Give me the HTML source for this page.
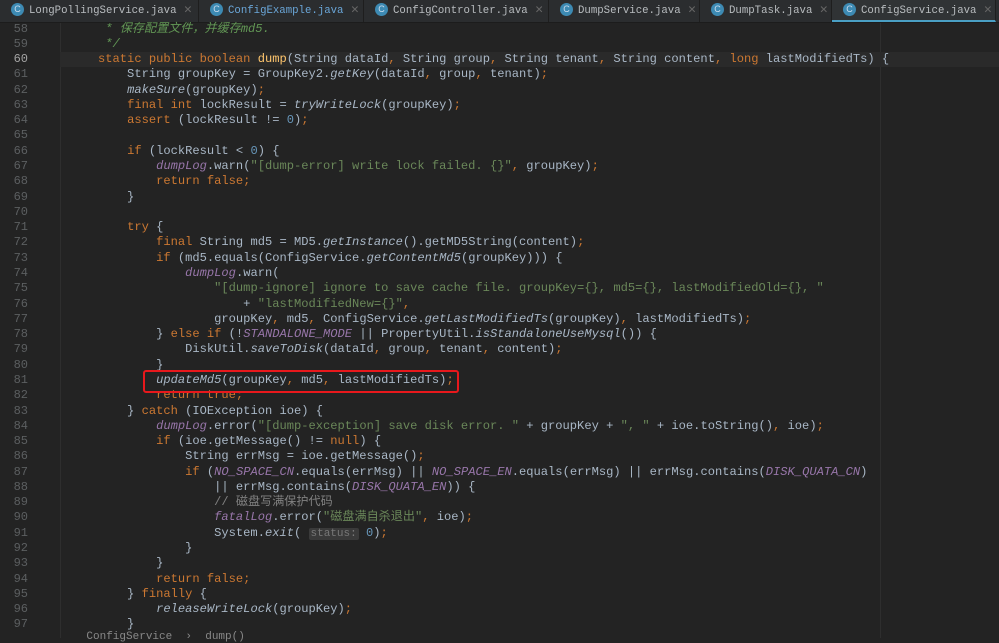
<!DOCTYPE html>
<html><head><meta charset="utf-8"><style>
body{margin:0;width:999px;height:638px;overflow:hidden;background:#232323;font-family:"Liberation Mono","Noto Sans CJK SC",monospace;}
#tabs{position:absolute;left:0;top:0;width:999px;height:22px;background:#2b2d2f;border-bottom:1px solid #1c1c1c;}
.tab{position:absolute;top:0;height:22px;font-size:10.7px;line-height:20px;color:#b8bcbf;white-space:nowrap;border-right:1px solid #1e1e1e;overflow:hidden}
.tab .c{display:inline-block;width:13px;height:13px;border-radius:50%;background:#3d8ab3;color:#cde;font-size:9px;line-height:13px;text-align:center;vertical-align:middle;margin:0 5px 2px 11px;font-family:"Liberation Sans",sans-serif}
.tab .x{color:#666;margin-left:7px;font-family:"Liberation Sans",sans-serif}
.act{background:#303335;border-bottom:2px solid #4a9fc4;height:20px}
.ln{position:absolute;left:0;width:28px;text-align:right;font-size:12px;color:#5c5f61}
.code{position:absolute;left:69px;font-size:12.1px;color:#a9b7c6;white-space:pre}
.row{position:absolute;left:0;width:999px;height:15.3px;line-height:15.3px}
.k{color:#cc7832}.s{color:#6a8759}.cm{color:#629755;font-style:italic}.f{color:#9876aa;font-style:italic}.i{font-style:italic}.n{color:#6897bb}.m{color:#ffc66d}.g{color:#808080}
.h{background:#3a3a3a;color:#787878;font-size:11px;border-radius:2px;padding:0 2px}
</style></head><body>
<div id="tabs">
<div class="tab" style="left:0;width:198px"><span class="c">C</span>LongPollingService.java<span class="x">✕</span></div>
<div class="tab" style="left:199px;width:164px;color:#6aa6d8"><span class="c">C</span>ConfigExample.java<span class="x">✕</span></div>
<div class="tab" style="left:364px;width:184px"><span class="c">C</span>ConfigController.java<span class="x">✕</span></div>
<div class="tab" style="left:549px;width:150px"><span class="c">C</span>DumpService.java<span class="x">✕</span></div>
<div class="tab" style="left:700px;width:131px"><span class="c">C</span>DumpTask.java<span class="x">✕</span></div>
<div class="tab act" style="left:832px;width:163px"><span class="c">C</span>ConfigService.java<span class="x">✕</span></div>
</div>
<div style="position:absolute;left:0;top:23px;width:999px;height:615px">
<div style="position:absolute;left:60px;top:0;width:1px;height:615px;background:#2e2e2e"></div>
<div style="position:absolute;left:880px;top:0;width:1px;height:615px;background:#2e2e2e"></div>
<div style="position:absolute;left:60px;top:28.6px;width:939px;height:15.3px;background:#2a2a2a"></div>
</div>
<div id="lines" style="position:absolute;left:0;top:21.5px">
<script>
var L=[
'     <span class="cm">* 保存配置文件，并缓存md5.</span>',
'     <span class="cm">*/</span>',
'    <span class="k">static public boolean </span><span class="m">dump</span>(String dataId<span class="k">, </span>String group<span class="k">, </span>String tenant<span class="k">, </span>String content<span class="k">, long </span>lastModifiedTs) {',
'        String groupKey = GroupKey2.<span class="i">getKey</span>(dataId<span class="k">, </span>group<span class="k">, </span>tenant)<span class="k">;</span>',
'        <span class="i">makeSure</span>(groupKey)<span class="k">;</span>',
'        <span class="k">final int </span>lockResult = <span class="i">tryWriteLock</span>(groupKey)<span class="k">;</span>',
'        <span class="k">assert </span>(lockResult != <span class="n">0</span>)<span class="k">;</span>',
'',
'        <span class="k">if </span>(lockResult &lt; <span class="n">0</span>) {',
'            <span class="f">dumpLog</span>.warn(<span class="s">"[dump-error] write lock failed. {}"</span><span class="k">, </span>groupKey)<span class="k">;</span>',
'            <span class="k">return false;</span>',
'        }',
'',
'        <span class="k">try </span>{',
'            <span class="k">final </span>String md5 = MD5.<span class="i">getInstance</span>().getMD5String(content)<span class="k">;</span>',
'            <span class="k">if </span>(md5.equals(ConfigService.<span class="i">getContentMd5</span>(groupKey))) {',
'                <span class="f">dumpLog</span>.warn(',
'                    <span class="s">"[dump-ignore] ignore to save cache file. groupKey={}, md5={}, lastModifiedOld={}, "</span>',
'                        + <span class="s">"lastModifiedNew={}"</span><span class="k">,</span>',
'                    groupKey<span class="k">, </span>md5<span class="k">, </span>ConfigService.<span class="i">getLastModifiedTs</span>(groupKey)<span class="k">, </span>lastModifiedTs)<span class="k">;</span>',
'            } <span class="k">else if </span>(!<span class="f">STANDALONE_MODE</span> || PropertyUtil.<span class="i">isStandaloneUseMysql</span>()) {',
'                DiskUtil.<span class="i">saveToDisk</span>(dataId<span class="k">, </span>group<span class="k">, </span>tenant<span class="k">, </span>content)<span class="k">;</span>',
'            }',
'            <span class="i">updateMd5</span>(groupKey<span class="k">, </span>md5<span class="k">, </span>lastModifiedTs)<span class="k">;</span>',
'            <span class="k">return true;</span>',
'        } <span class="k">catch </span>(IOException ioe) {',
'            <span class="f">dumpLog</span>.error(<span class="s">"[dump-exception] save disk error. "</span> + groupKey + <span class="s">", "</span> + ioe.toString()<span class="k">, </span>ioe)<span class="k">;</span>',
'            <span class="k">if </span>(ioe.getMessage() != <span class="k">null</span>) {',
'                String errMsg = ioe.getMessage()<span class="k">;</span>',
'                <span class="k">if </span>(<span class="f">NO_SPACE_CN</span>.equals(errMsg) || <span class="f">NO_SPACE_EN</span>.equals(errMsg) || errMsg.contains(<span class="f">DISK_QUATA_CN</span>)',
'                    || errMsg.contains(<span class="f">DISK_QUATA_EN</span>)) {',
'                    <span class="g">// 磁盘写满保护代码</span>',
'                    <span class="f">fatalLog</span>.error(<span class="s">"磁盘满自杀退出"</span><span class="k">, </span>ioe)<span class="k">;</span>',
'                    System.<span class="i">exit</span>( <span class="h">status:</span> <span class="n">0</span>)<span class="k">;</span>',
'                }',
'            }',
'            <span class="k">return false;</span>',
'        } <span class="k">finally </span>{',
'            <span class="i">releaseWriteLock</span>(groupKey)<span class="k">;</span>',
'        }'
];
var h='';
for(var j=0;j<L.length;j++){var y=j*15.28;
h+='<div class="row" style="top:'+y+'px"><span class="ln" style="color:'+(j==2?'#a4a4a4':'#5c5f61')+'">'+(58+j)+'</span><span class="code">'+L[j]+'</span></div>';}
document.write(h);
</script>
</div>
<div style="position:absolute;left:143px;top:370px;width:312px;height:19px;border:2px solid #e8181c;border-radius:3px"></div>
<div style="position:absolute;left:60px;top:631px;font-size:11px;color:#888;font-family:'Liberation Mono',monospace;white-space:pre">    ConfigService  ›  dump()</div>
</body></html>
